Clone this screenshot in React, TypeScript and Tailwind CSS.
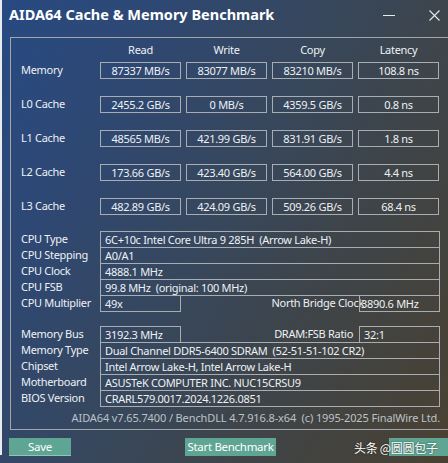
const font = { fontFamily: '"Noto Sans", "Open Sans", sans-serif' };

const benchRows = [
  { label: 'Memory', values: ['87337 MB/s', '83077 MB/s', '83210 MB/s', '108.8 ns'] },
  { label: 'L0 Cache', values: ['2455.2 GB/s', '0 MB/s', '4359.5 GB/s', '0.8 ns'] },
  { label: 'L1 Cache', values: ['48565 MB/s', '421.99 GB/s', '831.91 GB/s', '1.8 ns'] },
  { label: 'L2 Cache', values: ['173.66 GB/s', '423.40 GB/s', '564.00 GB/s', '4.4 ns'] },
  { label: 'L3 Cache', values: ['482.89 GB/s', '424.09 GB/s', '509.26 GB/s', '68.4 ns'] },
];

const cpuRows = [
  { label: 'CPU Type', value: '6C+10c Intel Core Ultra 9 285H  (Arrow Lake-H)' },
  { label: 'CPU Stepping', value: 'A0/A1' },
  { label: 'CPU Clock', value: '4888.1 MHz' },
  { label: 'CPU FSB', value: '99.8 MHz  (original: 100 MHz)' },
];

const boardRows = [
  { label: 'Memory Type', value: 'Dual Channel DDR5-6400 SDRAM  (52-51-51-102 CR2)' },
  { label: 'Chipset', value: 'Intel Arrow Lake-H, Intel Arrow Lake-H' },
  { label: 'Motherboard', value: 'ASUSTeK COMPUTER INC. NUC15CRSU9' },
  { label: 'BIOS Version', value: 'CRARL579.0017.2024.1226.0851' },
];

function InfoRow({ label, value, first }: { label: string; value: string; first?: boolean }) {
  return (
    <div className={`flex h-[17px] items-center ${first ? '' : '-mt-px'}`}>
      <div className="w-[79px] shrink-0 whitespace-nowrap">{label}</div>
      <div className="flex h-full flex-1 items-center whitespace-pre border border-[#a7adb3] pl-[4px] leading-none">
        {value}
      </div>
    </div>
  );
}

export default function App() {
  return (
    <div
      className="relative flex h-[463px] w-[448px] overflow-hidden bg-[linear-gradient(118deg,#274a82_0%,#2e4874_22%,#37475c_48%,#3f4447_70%,#4a4132_100%)] text-[11px] tracking-[-0.3px] text-[#eef1f4]"
      style={font}
    >
      {/* left edge of the window behind */}
      <div className="h-[455px] w-[2px] shrink-0 bg-[#e9ecef]" />

      <div className="flex min-w-0 flex-1 flex-col">
        {/* Title bar */}
        <div className="flex h-[30px] items-center pl-[7px]">
          <span className="text-[14.5px] font-bold tracking-normal text-white">AIDA64 Cache &amp; Memory Benchmark</span>
          <svg className="ml-auto" width="12" height="12" viewBox="0 0 12 12">
            <line x1="0" y1="6.5" x2="12" y2="6.5" stroke="#e6e9ec" strokeWidth="1" />
          </svg>
          <svg className="ml-[34px] mr-[8px]" width="11" height="11" viewBox="0 0 11 11">
            <path d="M0.5 0.5 L10.5 10.5 M10.5 0.5 L0.5 10.5" stroke="#e6e9ec" strokeWidth="1.1" />
          </svg>
        </div>

        {/* Group box */}
        <div className="ml-[8px] mt-[7px] w-[460px] shrink-0 border-b border-l border-t border-[#a0a6ac]">
          <div className="w-[429px] pl-[10px]">
            {/* header */}
            <div className="mt-[4px] flex h-[17px] items-center">
              <div className="w-[79px]" />
              <div className="flex gap-[5px]">
                {['Read', 'Write', 'Copy', 'Latency'].map((h) => (
                  <div key={h} className="w-[81px] text-center">{h}</div>
                ))}
              </div>
            </div>

            {benchRows.map((r, i) => (
              <div key={r.label} className={`flex h-[17px] items-center ${i === 0 ? 'mt-[3px]' : 'mt-[17px]'}`}>
                <div className="w-[79px] whitespace-nowrap">{r.label}</div>
                <div className="flex gap-[5px]">
                  {r.values.map((v, j) => (
                    <div
                      key={j}
                      className="flex h-[17px] w-[81px] items-center justify-center border border-[#a7adb3] leading-none"
                    >
                      {v}
                    </div>
                  ))}
                </div>
              </div>
            ))}

            {/* CPU */}
            <div className="mt-[16px]">
              {cpuRows.map((r, i) => (
                <InfoRow key={r.label} label={r.label} value={r.value} first={i === 0} />
              ))}
              <div className="-mt-px flex h-[17px] items-center">
                <div className="w-[79px] shrink-0 whitespace-nowrap">CPU Multiplier</div>
                <div className="flex h-full w-[81px] items-center border border-[#a7adb3] pl-[4px] leading-none">49x</div>
                <div className="ml-auto -mr-[5px] whitespace-nowrap">North Bridge Clock</div>
                <div className="flex h-full w-[81px] items-center border border-[#a7adb3] pl-[1px] leading-none">3890.6 MHz</div>
              </div>
            </div>

            {/* Memory / board */}
            <div className="mt-[14px]">
              <div className="flex h-[17px] items-center">
                <div className="w-[79px] shrink-0 whitespace-nowrap">Memory Bus</div>
                <div className="flex h-full w-[81px] items-center border border-[#a7adb3] pl-[4px] leading-none">3192.3 MHz</div>
                <div className="ml-auto mr-[6px] whitespace-nowrap">DRAM:FSB Ratio</div>
                <div className="flex h-full w-[81px] items-center border border-[#a7adb3] pl-[4px] leading-none">32:1</div>
              </div>
              {boardRows.map((r) => (
                <InfoRow key={r.label} label={r.label} value={r.value} />
              ))}
            </div>

            {/* footer */}
            <div className="flex h-[22px] items-center justify-end whitespace-pre tracking-[-0.12px] text-[#bcc2c8]">
              AIDA64 v7.65.7400 / BenchDLL 4.7.916.8-x64  (c) 1995-2025 FinalWire Ltd.
            </div>
          </div>
        </div>

        {/* Buttons */}
        <div className="mt-[8px] flex h-[18px] whitespace-nowrap text-[11.5px] text-white">
          <div className="ml-[7px] flex w-[62px] items-center justify-center border-b border-[#8cc7b9] bg-[#5fa594]">Save</div>
          <div className="ml-[114px] flex w-[91px] items-center justify-center bg-[#5fa594]">Start Benchmark</div>
          <div className="ml-auto w-[59px] bg-[#5fa594]" />
        </div>
      </div>

      {/* watermark */}
      <div
        className="absolute left-[354px] top-[439px] text-[12px] text-white [text-shadow:0_0_2px_rgba(0,0,0,0.6)]"
        style={{ fontFamily: '"Noto Sans CJK SC", "Noto Sans", sans-serif' }}
      >
        头条 @圆圆包子
      </div>
    </div>
  );
}
